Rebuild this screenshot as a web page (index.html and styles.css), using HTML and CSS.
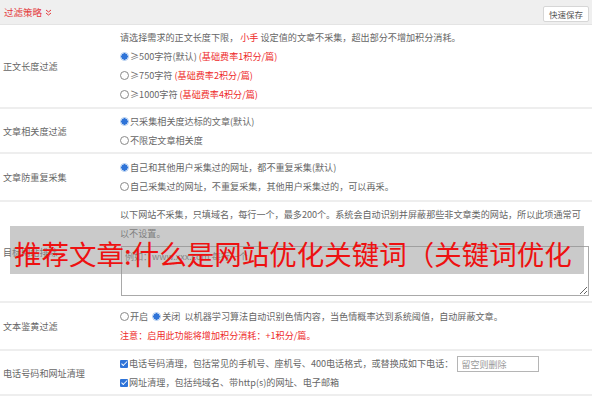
FILE: index.html
```html
<!DOCTYPE html>
<html lang="zh-CN">
<head>
  <meta charset="UTF-8">
  <title>过滤策略</title>
  <link rel="stylesheet" href="styles.css">
</head>
<body>
  <div class="panel">
    <div class="panel-head">
      <span class="panel-title">过滤策略
        <svg class="chev" width="7" height="7" viewBox="0 0 7 7"><path d="M1 1 L3.5 3 L6 1 M1 4 L3.5 6 L6 4" fill="none" stroke="#e4393c" stroke-width="1"/></svg>
      </span>
      <button class="btn-save">快速保存</button>
    </div>

    <div class="row">
      <div class="label">正文长度过滤</div>
      <div class="field">
        <div class="line">请选择需求的正文长度下限， <span class="red">小手</span> 设定值的文章不采集，超出部分不增加积分消耗。</div>
        <div class="line"><span class="radio on"></span>≥500字符(默认) <span class="red">(基础费率1积分/篇)</span></div>
        <div class="line"><span class="radio"></span>≥750字符 <span class="red">(基础费率2积分/篇)</span></div>
        <div class="line"><span class="radio"></span>≥1000字符 <span class="red">(基础费率4积分/篇)</span></div>
      </div>
    </div>

    <div class="row">
      <div class="label">文章相关度过滤</div>
      <div class="field">
        <div class="line"><span class="radio on"></span>只采集相关度达标的文章(默认)</div>
        <div class="line"><span class="radio"></span>不限定文章相关度</div>
      </div>
    </div>

    <div class="row tall">
      <div class="label">文章防重复采集</div>
      <div class="field">
        <div class="line"><span class="radio on"></span>自己和其他用户采集过的网址，都不重复采集(默认)</div>
        <div class="line"><span class="radio"></span>自己采集过的网址，不重复采集，其他用户采集过的，可以再采。</div>
      </div>
    </div>

    <div class="row">
      <div class="label">目标网站排除</div>
      <div class="field">
        <div class="line">以下网站不采集，只填域名，每行一个，最多200个。系统会自动识别并屏蔽那些非文章类的网站，所以此项通常可</div>
        <div class="line">以不设置。</div>
        <textarea class="sites" placeholder="例如：www.xxx.com 每行一个"></textarea>
      </div>
    </div>

    <div class="row tall">
      <div class="label">文本鉴黄过滤</div>
      <div class="field">
        <div class="line"><span class="radio"></span>开启 &nbsp;<span class="radio on"></span>关闭 &nbsp;以机器学习算法自动识别色情内容，当色情概率达到系统阈值，自动屏蔽文章。</div>
        <div class="line red">注意：启用此功能将增加积分消耗：+1积分/篇。</div>
      </div>
    </div>

    <div class="row">
      <div class="label">电话号码和网址清理</div>
      <div class="field">
        <div class="line"><span class="check"></span>电话号码清理，包括常见的手机号、座机号、400电话格式，或替换成如下电话： <input class="phone" type="text" placeholder="留空则删除"></div>
        <div class="line"><span class="check"></span>网址清理，包括纯域名、带http(s)的网址、电子邮箱</div>
      </div>
    </div>

    <div class="row">
      <div class="label">文章图片本地化处理</div>
      <div class="field">
        <div class="line"><span class="radio"></span>开启 &nbsp;<span class="radio on"></span>关闭 &nbsp;将文章中的图片下载保存 <span class="red">(每篇增加1积分)</span> <span class="red">(推荐)</span></div>
      </div>
    </div>

    <div class="overlay">推荐文章:什么是网站优化关键词（关键词优化</div>
  </div>
</body>
</html>
```

FILE: styles.css
```css
body { margin: 0; background: #fff; font-family: "Noto Sans CJK SC", "Liberation Sans", sans-serif; font-size: 9.1px; color: #666; }
.panel { width: 592px; height: 400px; overflow: hidden; position: relative; }
.panel-head { height: 25px; background: #efefef; display: flex; align-items: center; justify-content: space-between; padding: 0 3px 0 4px; border-bottom: 1px solid #e4e4e4; box-sizing: border-box; }
.panel-title { color: #e4393c; font-size: 9.5px; display: flex; align-items: center; gap: 3px; }
.btn-save { font-family: inherit; font-size: 8.5px; color: #555; background: #fff; border: 1px solid #d6d6d6; border-radius: 2px; padding: 0 5px; height: 16px; line-height: 14px; margin-top: 3px; }
.row { display: grid; grid-template-columns: 120px 1fr; align-items: center; border-bottom: 2px solid #eeeeee; padding: 3px 0 2.5px; }
.row.tall { padding: 4px 0 4px; }
.label { padding-left: 3px; }
.line { line-height: 19px; white-space: nowrap; }
.red { color: #ee2b2b; }
.radio { width: 7px; height: 7px; border: 1px solid #8a8a8a; border-radius: 50%; margin-right: 1px; display: inline-block; vertical-align: -1px; box-sizing: content-box; background: #fff; }
.radio.on { border-color: #a9c7ee; background: radial-gradient(circle, #2f74d8 0 3px, #fff 3.5px); }
.check { width: 8px; height: 8px; background: #2f74d8; border-radius: 1px; margin-right: 1px; display: inline-block; vertical-align: -1px; position: relative; }
.check::after { content: ""; position: absolute; left: 2.5px; top: 0.5px; width: 2px; height: 4.5px; border: solid #fff; border-width: 0 1.3px 1.3px 0; transform: rotate(45deg); }
.sites { display: block; width: 468px; height: 50px; margin: 3px 0 2px 1px; border: 1px solid #a9a9a9; box-sizing: border-box; font-family: inherit; font-size: 9px; color: #999; padding: 3px; }
.phone { width: 82px; height: 16px; box-sizing: border-box; border: 1px solid #b5b5b5; font-family: inherit; font-size: 9px; padding: 0 3px; margin-left: 2px; vertical-align: middle; }
.phone::placeholder { color: #999; }
.overlay { position: absolute; left: 10px; top: 226px; width: 574px; height: 48px; background: rgba(150, 150, 150, 0.5); color: #ee1111; font-size: 27.5px; line-height: 30px; padding: 12px 0 0 4px; box-sizing: border-box; white-space: nowrap; overflow: hidden; }
```
